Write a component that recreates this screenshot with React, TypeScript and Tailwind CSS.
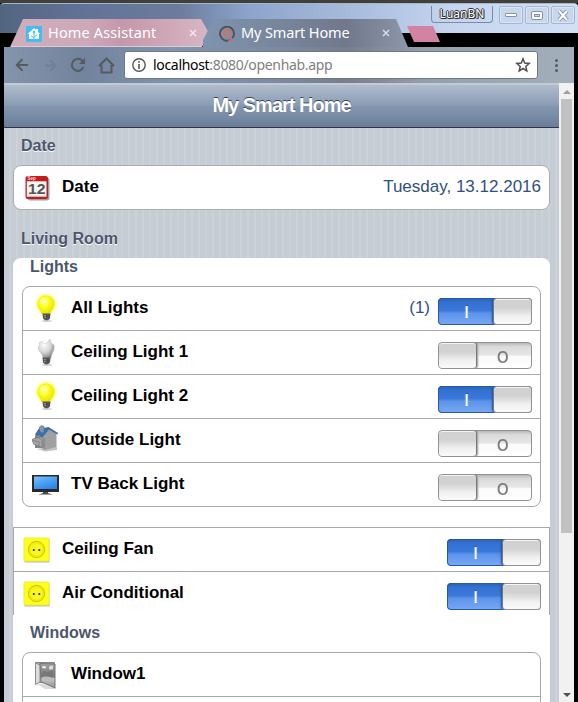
import type { ReactNode } from 'react';
import { ArrowLeft, ArrowRight } from 'lucide-react';

const chromeFont = "font-['Noto_Sans','Open_Sans',sans-serif]";

function Toggle({ on }: { on: boolean }) {
  return on ? (
    <span className="relative mt-[11px] flex h-[27px] w-[94px] shrink-0 overflow-hidden rounded-[4px] bg-[linear-gradient(#2a5faf_0%,#3470d0_15%,#3a78dc_47%,#5c94ea_56%,#78a8f3_100%)]">
      <span className="flex h-[27px] w-[56px] justify-center rounded-l-[4px] border border-r-0 border-[#2558ae] pt-[3px] font-['Liberation_Sans',sans-serif] text-[17px] leading-[22px] text-white [text-shadow:0_-1px_#234f98,0_0_1px_white]">I</span>
      <span className="-ml-px h-[27px] w-[39px] rounded-[4px] border border-[#929292] border-l-[#777] bg-[linear-gradient(#d0d0d0_0%,#d2d2d2_35%,#f0f0f0_70%,#fafafa_100%)] shadow-[inset_0_1px_#f5f5f5,-1px_0_2px_#24509a]" />
    </span>
  ) : (
    <span className="relative mt-[11px] flex h-[27px] w-[94px] shrink-0 overflow-hidden rounded-[4px] border border-[#929292] bg-[linear-gradient(#b9b9b9_0%,#dadada_15%,#e6e6e6_48%,#fafafa_54%,#ffffff_100%)]">
      <span className="-my-px -ml-px h-[27px] w-[39px] rounded-[4px] border border-[#929292] border-r-[#777] bg-[linear-gradient(#d0d0d0_0%,#d2d2d2_35%,#f0f0f0_70%,#fafafa_100%)] shadow-[inset_0_1px_#f5f5f5,1px_0_2px_#999]" />
      <span className="flex-1 pt-[4px] pr-[2px] text-center font-['Open_Sans',sans-serif] text-[17px] font-semibold leading-[20px] text-[#7c7c7c]"><span className="inline-block scale-x-[.9]">O</span></span>
    </span>
  );
}

function Bulb({ on }: { on: boolean }) {
  const id = on ? 'bulbOn' : 'bulbOff';
  return (
    <svg width="32" height="32" viewBox="-1 -1 32 32">
      <defs>
        <radialGradient id={id} cx=".38" cy=".3" r=".75">
          <stop offset="0" stopColor={on ? '#ffffe8' : '#ffffff'} />
          <stop offset={on ? '.4' : '.55'} stopColor={on ? '#ffff20' : '#d4d4d4'} />
          <stop offset="1" stopColor={on ? '#e6df00' : '#808080'} />
        </radialGradient>
        <filter id={id + 'Glow'}><feGaussianBlur stdDeviation=".9" /></filter>
      </defs>
      {on && <circle cx="15" cy="11" r="9.5" fill="#ffff20" filter="url(#bulbOnGlow)" />}
      <ellipse cx="16" cy="28" rx="5" ry="1" fill="#aaa" opacity=".5" />
      <path d={on ? 'M15 3c-5 0-8 3.500-8 8 0 4 3 6 4 10h8c1-4 4-6 4-10 0-4.500-3-8-8-8z' : 'M11 4c1 3 3 3 5 2l3-4 1 4 3 2c1 6-2 7-3 13h-8c0-5-5-6-5-11l2-2-1-2z'} fill={`url(#${id})`} stroke={on ? '#e5e300' : '#bbb'} strokeWidth=".5" />
      <path d="M11.500 20.500h8l-.5 5-2 1.800h-3l-2-1.800z" fill="#555" />
      <path d="M12.500 21.500h2.500v4h-2zM12 23.500h7" fill="#999" stroke="#424242" strokeWidth=".5" />
    </svg>
  );
}

function Calendar() {
  return (
    <svg width="32" height="32" viewBox="1 -.5 32 32">
      <rect x="7.500" y="6" width="22" height="23" rx="3" fill="#777" opacity=".7" />
      <rect x="5.500" y="4.500" width="22.500" height="23" rx="2.500" fill="#c31c1d" />
      <path d="M6.800 9.800h19.700v15.200H6.800z" fill="#f6f6f6" />
      <path d="M6.800 24h19.700v1H6.800z" fill="#ddd" />
      <text x="7.500" y="8.800" fill="#ffd7d7" fontSize="4.500" fontWeight="700" fontFamily="Liberation Sans">Sep</text>
      <text x="8" y="22.500" fill="#555" fontSize="15.500" fontWeight="700" fontFamily="Liberation Sans" textLength="17.500" lengthAdjust="spacingAndGlyphs">12</text>
    </svg>
  );
}

function House() {
  return (
    <svg width="32" height="32" viewBox="0 0 32 32">
      <path d="M7 25l8 2.500 12-1.500v-3l-14 1z" fill="#888" opacity=".5" />
      <path d="M5 12l6-3 3 6v9H5z" fill="#858687" />
      <path d="M18.500 3.500l8 6v13.500l-11.500 3-5-3V13z" fill="#a0a0a1" />
      <path d="M13 14l-1 9 3 3 .5-12z" fill="#8d8d8e" />
      <path d="M5 10.500L8.500 5l10-2 9.500 6-.5 1.500-8.500-5-7 8.500-3-3-3 1z" fill="#3a6eac" />
      <path d="M9.500 3l2-1.500L14 2.500V8l-2 1-2.500-2z" fill="#8697ab" stroke="#5d6c7e" strokeWidth=".6" />
      <path d="M2.500 15l6-1.500 3.500 2.500v7.500L3.500 20v-1.500l-1-.5z" fill="#a5a5a5" stroke="#747474" strokeWidth=".7" />
      <path d="M3 16.500l6 1.500v4" fill="none" stroke="#777" strokeWidth=".7" />
    </svg>
  );
}

function Tv() {
  return (
    <svg width="32" height="32" viewBox="0 0 32 32">
      <defs><linearGradient id="tv" x1="0" y1="0" x2=".6" y2="1"><stop stopColor="#80c1fb" /><stop offset=".5" stopColor="#4da4f4" /><stop offset="1" stopColor="#2f86e7" /></linearGradient></defs>
      <path d="M2 7h27v17H2z" fill="#292929" />
      <path d="M4 8.500h23v12.500H4z" fill="url(#tv)" />
      <path d="M13 24h5v1l4 1.500H9l4-1.500z" fill="#4b4b4b" />
      <path d="M9 26.500h13" stroke="#a5a5a5" strokeWidth=".8" />
    </svg>
  );
}

function Socket() {
  return (
    <svg width="32" height="32" viewBox=".5 -.5 32 32">
      <defs><filter id="socketShadow"><feGaussianBlur stdDeviation=".7" /></filter></defs>
      <path d="M4 6h25v23H4z" fill="#929280" opacity=".6" filter="url(#socketShadow)" />
      <rect x="3.500" y="4.500" width="25" height="23" rx="1" fill="#ffff1a" stroke="#eded38" />
      <circle cx="16" cy="16" r="8.200" fill="#eeea12" stroke="#bbb71f" strokeWidth=".8" />
      <circle cx="16" cy="16" r="6" fill="#f9f620" />
      <circle cx="13.300" cy="16.500" r="1.100" fill="#292700" /><circle cx="18.800" cy="16.500" r="1.100" fill="#292700" />
    </svg>
  );
}

function WindowIcon() {
  return (
    <svg width="32" height="32" viewBox="0 0 32 32">
      <defs><linearGradient id="pane" x1="0" y1="0" x2="0" y2="1"><stop stopColor="#a2a2a2" /><stop offset=".55" stopColor="#777" /><stop offset=".62" stopColor="#c8c8c8" /><stop offset="1" stopColor="#8d8d8d" /></linearGradient></defs>
      <path d="M5 25l5 1 5-2 11 6v1H15z" fill="#999" opacity=".35" />
      <path d="M5.500 4.500h19v20h-19z" fill="#aaa" stroke="#888" />
      <path d="M5.500 5l4.500 2v17l-4.500 2.500z" fill="#ddd" stroke="#8b8b8b" />
      <path d="M10 5.500l15 .5v24l-14-6.500z" fill="url(#pane)" stroke="#777" />
      <path d="M12 8.500c2-1 4-.5 4 1s-3 1-4 0z" fill="#eee" />
      <path d="M19 10c0-2 2-3 4-2v3c-2 1-4 1-4-1z" fill="#ddd" />
      <path d="M12 18c3 1 7 2 11-1v-5l-5 2-5-1z" fill="#777" />
      <path d="M12 19c4-1 8-1 12 2v2l-12-2z" fill="#bbb" />
    </svg>
  );
}

function Row({ icon, label, value, on, last = false }: { icon: ReactNode; label: string; value?: string; on?: boolean; last?: boolean }) {
  return (
    <div className={`flex pr-[8px] pl-[7px] ${last ? 'h-[43px]' : 'h-[44px] border-b border-[#a5a8ac]'}`}>
      <span className="mt-[5px] h-8 w-8 shrink-0">{icon}</span>
      <span className="ml-[9px] flex-1 text-[17px] font-bold leading-[41px] text-black">{label}</span>
      {value && <span className={`text-[17px] leading-[41px] text-[#324f85] ${on === undefined ? '' : 'mr-[8px]'}`}>{value}</span>}
      {on !== undefined && <Toggle on={on} />}
    </div>
  );
}

function WindowButton({ children, className }: { children: ReactNode; className: string }) {
  return <span className={`flex h-[18px] items-center justify-center rounded-[2px] border border-[#a6b6ce] bg-[#c9d7ec] shadow-[inset_0_0_0_1px_#d9e4f4] ${className}`}>{children}</span>;
}

export default function App() {
  return (
    <div className="flex h-[702px] w-[578px] flex-col overflow-hidden bg-black font-['Liberation_Sans',sans-serif]">
      <div className="h-[3px] shrink-0 bg-[#403f39]" />
      <header className={`relative h-[44px] shrink-0 ${chromeFont}`}>
        <div className="flex h-[30px] justify-end gap-[6px] rounded-t-[4px] border-t border-[#a6b5ce] bg-[linear-gradient(90deg,#52657f_0%,#607397_14%,#6b7d9d_31%,#8ca4cc_43%,#a9bddd_62%,#c5d5ef_78%,#d2e0f6_100%)] pr-[3px]">
          <span className="mt-[2px] flex h-[17px] w-[62px] items-center justify-center rounded-b-[4px] border border-t-0 border-[#7d8ba2] pb-px text-[12px] leading-none text-white [text-shadow:1px_0_#333,-1px_0_#333,0_1px_#333,0_-1px_#333,1px_1px_#333]">LuanBN</span>
          <div className="mt-[2px] flex gap-[2px]">
            <WindowButton className="w-[24px]"><span className="h-[4px] w-[12px] rounded-[1px] border border-[#8292aa] bg-white" /></WindowButton>
            <WindowButton className="w-[24px]"><span className="h-[9px] w-[12px] rounded-[2px] border border-[#8292aa] bg-white p-px"><i className="mx-px mt-px block h-[3px] border border-[#8292aa] bg-[#c9d7ec]" /></span></WindowButton>
            <WindowButton className="w-[24px]"><svg width="12" height="11"><path d="M2 1l8 9M10 1L2 10" stroke="#8292aa" strokeWidth="4" /><path d="M2 1l8 9M10 1L2 10" stroke="white" strokeWidth="2" /></svg></WindowButton>
          </div>
        </div>
        <svg className="absolute top-4 left-0" width="450" height="28" viewBox="0 0 450 28">
          <defs>
            <linearGradient id="pink"><stop stopColor="#cfadbb" /><stop offset=".4" stopColor="#cda8b8" /><stop offset=".56" stopColor="#c597aa" /><stop offset="1" stopColor="#d8b6c3" /></linearGradient>
            <linearGradient id="activeTab"><stop stopColor="#7f94b1" /><stop offset=".3" stopColor="#79889f" /><stop offset=".7" stopColor="#71788b" /><stop offset="1" stopColor="#8c97a9" /></linearGradient>
          </defs>
          <path d="M10 28L23 0H201l8 14-7 14z" fill="url(#pink)" />
          <path d="M11 27.500H202" stroke="#d9cdd8" />
          <path d="M203 28v-7L214 0H396l12 28z" fill="url(#activeTab)" />
          <path d="M407 7h26l7 16h-26z" fill="#d283a1" />
        </svg>
        <div className="absolute top-4 left-[26px] flex h-[28px] w-[180px] items-center text-white">
          <svg className="mt-px h-4 w-4" viewBox="0 0 16 16"><path d="M0 0h16v16H0z" fill="#41bdf5" /><path d="M1.500 8L8 2l2 2V3h2v3l2.500 2H13v5H3V8z" fill="white" /><path d="M8 13V6m0 6L5 9.500M8 11l3-2" stroke="#41bdf5" strokeWidth=".9" /><circle cx="8" cy="6" r="1.200" fill="#41bdf5" /></svg>
          <span className="ml-[6px] text-[14.500px] tracking-[.14px]">Home Assistant</span>
        </div>
        <svg className="absolute top-[26px] left-[189px]" width="8" height="8"><path d="M1 1l6 6M7 1L1 7" stroke="#f3e2e8" strokeWidth="1.500" /></svg>
        <div className="absolute top-4 left-[219px] flex h-[28px] items-center text-white">
          <svg className="mt-px h-4 w-4" viewBox="0 0 16 16"><path d="M11 14A7 7 0 1 1 15 8c0 2-.5 3-2 4" fill="none" stroke="#4f5058" strokeWidth="1.900" /><path d="M3.500 7.500L8 3.500l4.500 4M5.500 7v5m5-5v5M9 15h5" fill="none" stroke="#e9694d" strokeWidth="1.500" /></svg>
          <span className="ml-[6px] text-[14.500px] tracking-[-.13px]">My Smart Home</span>
        </div>
        <svg className="absolute top-[26px] left-[382px]" width="8" height="8"><path d="M1 1l6 6M7 1L1 7" stroke="#d8dce3" strokeWidth="1.500" /></svg>
      </header>

      <div className="ml-1 flex h-[36px] w-[570px] shrink-0 items-center bg-[linear-gradient(90deg,#8494aa_0%,#72839d_14%,#8195af_30%,#7a899f_50%,#777e8e_60%,#949fae_74%,#a4afbc_100%)]">
        <ArrowLeft className="ml-[9px] h-[18px] w-[18px] text-[#555b62]" strokeWidth={2.500} />
        <ArrowRight className="ml-[11px] h-[17px] w-[17px] text-[#718095]" strokeWidth={2.500} />
        <svg className="ml-[11px] h-4 w-4 text-[#555a60]" viewBox="0 0 16 16"><path d="M13.500 10A6 6 0 1 1 12 3.500l2 2" fill="none" stroke="currentColor" strokeWidth="2" /><path d="M15 1v6H9z" fill="currentColor" /></svg>
        <svg className="ml-[12px] h-[17px] w-[17px] text-[#555a60]" viewBox="0 0 17 17"><path d="M1 9l7.500-7.500L16 9M3.500 8v7.500h10V8" fill="none" stroke="currentColor" strokeWidth="2" /></svg>
        <div className={`ml-[9px] flex h-[28px] w-[414px] items-center rounded-[3px] border border-[#707782] bg-white ${chromeFont}`}>
          <svg className="ml-[7px] h-[14px] w-[14px]" viewBox="0 0 14 14"><circle cx="7" cy="7" r="6.200" fill="none" stroke="#555" strokeWidth="1.400" /><path d="M6.200 6h1.600v5H6.200zM6.200 3h1.600v1.700H6.200z" fill="#555" /></svg>
          <span className="-mt-[2px] ml-[7px] text-[14px] tracking-[-.32px] text-black">localhost<span className="text-[#808080]">:8080/openhab.app</span></span>
          <svg className="mr-[6px] ml-auto h-4 w-4" viewBox="0 0 16 16"><path d="M8 1.800l1.700 4.200 4.500.4-3.400 3 1 4.500L8 11.500l-3.800 2.400 1-4.500-3.400-3 4.500-.4z" fill="none" stroke="#505050" strokeWidth="1.500" /></svg>
        </div>
        <span className="ml-[17px] flex flex-col gap-[2px]"><i className="h-[3px] w-[3px] rounded-full bg-[#555b62]" /><i className="h-[3px] w-[3px] rounded-full bg-[#555b62]" /><i className="h-[3px] w-[3px] rounded-full bg-[#555b62]" /></span>
      </div>

      <div className="ml-1 flex h-[619px] w-[570px] shrink-0">
        <main className="h-full w-[555px] overflow-hidden bg-[repeating-linear-gradient(90deg,#c5ccd4_0,#c5ccd4_5px,#cbd2d8_5px,#cbd2d8_7px)]">
          <h1 className="h-[45px] border-t-2 border-b border-t-[#c4cad4] border-b-[#2d3642] bg-[linear-gradient(#b0bccd_0%,#889bb3_50%,#8195af_51%,#7a8ea8_70%,#6b7d98_100%)] text-center text-[20px] font-bold leading-[41px] tracking-[-1px] text-white [text-shadow:0_-1px_#34455b]">My Smart Home</h1>
          <h2 className="h-[37px] pl-[17px] text-[16px] font-bold leading-[35px] text-[#4c566c] [text-shadow:0_1px_white]">Date</h2>
          <section className="mx-[9px] rounded-[8px] border border-[#aaadb0] bg-white"><Row icon={<Calendar />} label="Date" value="Tuesday, 13.12.2016" last /></section>
          <h2 className="h-[48px] pt-[11px] pl-[17px] text-[16px] font-bold leading-[36px] text-[#4c566c] [text-shadow:0_1px_white]">Living Room</h2>
          <section className="mx-[9px] h-[500px] rounded-t-[8px] bg-white">
            <h3 className="h-[28px] pl-[17px] text-[16px] font-bold leading-[18px] text-[#4c566c]">Lights</h3>
            <div className="mx-[9px] rounded-[8px] border border-[#a5a8ac]">
              <Row icon={<Bulb on />} label="All Lights" value="(1)" on />
              <Row icon={<Bulb on={false} />} label="Ceiling Light 1" on={false} />
              <Row icon={<Bulb on />} label="Ceiling Light 2" on />
              <Row icon={<House />} label="Outside Light" on={false} />
              <Row icon={<Tv />} label="TV Back Light" on={false} last />
            </div>
            <div className="mt-[20px] border-x border-t border-[#a5a8ac]">
              <Row icon={<Socket />} label="Ceiling Fan" on />
              <Row icon={<Socket />} label="Air Conditional" on last />
            </div>
            <h3 className="h-[37px] pl-[17px] text-[16px] font-bold leading-[35px] text-[#4c566c]">Windows</h3>
            <div className="mx-[9px] h-[80px] rounded-t-[8px] border border-[#a5a8ac]"><Row icon={<WindowIcon />} label="Window1" /></div>
          </section>
        </main>
        <aside className="flex w-[15px] flex-col items-center bg-[#f1f1f1]">
          <i className="mt-[7px] border-x-4 border-b-4 border-x-transparent border-b-[#a0a0a0]" />
          <div className="mt-[5px] h-[434px] w-[11px] bg-[#c1c1c1]" />
          <i className="mt-auto mb-[5px] border-x-4 border-t-4 border-x-transparent border-t-[#505050]" />
        </aside>
      </div>
    </div>
  );
}
